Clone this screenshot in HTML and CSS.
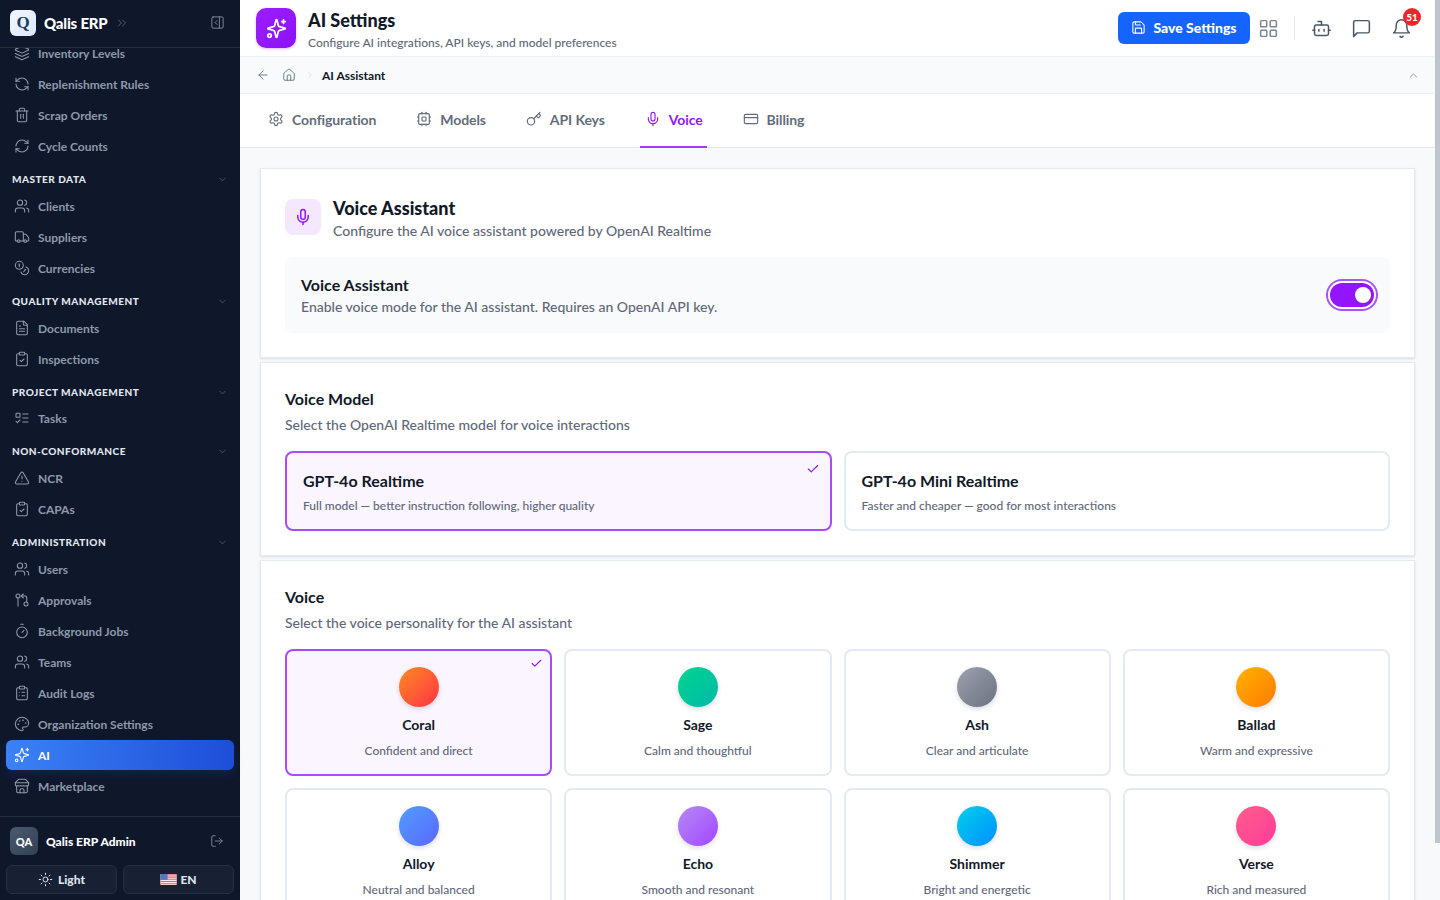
FILE: index.html
```html
<!DOCTYPE html>
<html lang="en">
<head>
    <meta charset="UTF-8">
    <title>AI Settings - Qalis ERP</title>
    <link rel="stylesheet" href="styles.css">
</head>
<body>

    <svg class="icon-defs" aria-hidden="true">
        <symbol id="i-layers" viewBox="0 0 24 24"><path d="m12.83 2.18a2 2 0 0 0-1.66 0L2.6 6.08a1 1 0 0 0 0 1.83l8.58 3.91a2 2 0 0 0 1.66 0l8.58-3.9a1 1 0 0 0 0-1.83Z"/><path d="m22 17.65-9.17 4.16a2 2 0 0 1-1.66 0L2 17.65"/><path d="m22 12.65-9.17 4.16a2 2 0 0 1-1.66 0L2 12.65"/></symbol>
        <symbol id="i-refresh-ccw" viewBox="0 0 24 24"><path d="M21 12a9 9 0 0 0-9-9 9.75 9.75 0 0 0-6.74 2.74L3 8"/><path d="M3 3v5h5"/><path d="M3 12a9 9 0 0 0 9 9 9.75 9.75 0 0 0 6.74-2.74L21 16"/><path d="M16 16h5v5"/></symbol>
        <symbol id="i-refresh-cw" viewBox="0 0 24 24"><path d="M3 12a9 9 0 0 1 9-9 9.75 9.75 0 0 1 6.74 2.74L21 8"/><path d="M21 3v5h-5"/><path d="M21 12a9 9 0 0 1-9 9 9.75 9.75 0 0 1-6.74-2.74L3 16"/><path d="M8 16H3v5"/></symbol>
        <symbol id="i-trash" viewBox="0 0 24 24"><path d="M3 6h18"/><path d="M19 6v14c0 1-1 2-2 2H7c-1 0-2-1-2-2V6"/><path d="M8 6V4c0-1 1-2 2-2h4c1 0 2 1 2 2v2"/><path d="M10 11v6"/><path d="M14 11v6"/></symbol>
        <symbol id="i-users" viewBox="0 0 24 24"><path d="M16 21v-2a4 4 0 0 0-4-4H6a4 4 0 0 0-4 4v2"/><circle cx="9" cy="7" r="4"/><path d="M22 21v-2a4 4 0 0 0-3-3.87"/><path d="M16 3.13a4 4 0 0 1 0 7.75"/></symbol>
        <symbol id="i-truck" viewBox="0 0 24 24"><path d="M14 18V6a2 2 0 0 0-2-2H4a2 2 0 0 0-2 2v11a1 1 0 0 0 1 1h2"/><path d="M15 18H9"/><path d="M19 18h2a1 1 0 0 0 1-1v-3.65a1 1 0 0 0-.22-.624l-3.48-4.35A1 1 0 0 0 17.52 8H14"/><circle cx="17" cy="18" r="2"/><circle cx="7" cy="18" r="2"/></symbol>
        <symbol id="i-coins" viewBox="0 0 24 24"><circle cx="8" cy="8" r="6"/><path d="M18.09 10.37A6 6 0 1 1 10.34 18"/><path d="M7 6h1v4"/><path d="m16.71 13.88.7.71-2.82 2.82"/></symbol>
        <symbol id="i-file" viewBox="0 0 24 24"><path d="M15 2H6a2 2 0 0 0-2 2v16a2 2 0 0 0 2 2h12a2 2 0 0 0 2-2V7Z"/><path d="M14 2v4a2 2 0 0 0 2 2h4"/><path d="M10 9H8"/><path d="M16 13H8"/><path d="M16 17H8"/></symbol>
        <symbol id="i-clip-check" viewBox="0 0 24 24"><rect x="8" y="2" width="8" height="4" rx="1"/><path d="M16 4h2a2 2 0 0 1 2 2v14a2 2 0 0 1-2 2H6a2 2 0 0 1-2-2V6a2 2 0 0 1 2-2h2"/><path d="m9 14 2 2 4-4"/></symbol>
        <symbol id="i-clip-list" viewBox="0 0 24 24"><rect x="8" y="2" width="8" height="4" rx="1"/><path d="M16 4h2a2 2 0 0 1 2 2v14a2 2 0 0 1-2 2H6a2 2 0 0 1-2-2V6a2 2 0 0 1 2-2h2"/><path d="M12 11h4"/><path d="M12 16h4"/><path d="M8 11h.01"/><path d="M8 16h.01"/></symbol>
        <symbol id="i-todo" viewBox="0 0 24 24"><rect x="3" y="5" width="6" height="6" rx="1"/><path d="m3 17 2 2 4-4"/><path d="M13 6h8"/><path d="M13 12h8"/><path d="M13 18h8"/></symbol>
        <symbol id="i-alert" viewBox="0 0 24 24"><path d="m21.73 18-8-14a2 2 0 0 0-3.48 0l-8 14A2 2 0 0 0 4 21h16a2 2 0 0 0 1.73-3"/><path d="M12 9v4"/><path d="M12 17h.01"/></symbol>
        <symbol id="i-pull" viewBox="0 0 24 24"><circle cx="18" cy="18" r="3"/><circle cx="6" cy="6" r="3"/><path d="M11 6h6a2 2 0 0 1 2 2v7"/><path d="m14 9-3-3 3-3"/><path d="M6 9v12"/></symbol>
        <symbol id="i-timer" viewBox="0 0 24 24"><path d="M10 2h4"/><path d="m12 14 3-3"/><circle cx="12" cy="14" r="8"/></symbol>
        <symbol id="i-palette" viewBox="0 0 24 24"><circle cx="13.5" cy="6.5" r=".5"/><circle cx="17.5" cy="10.5" r=".5"/><circle cx="8.5" cy="7.5" r=".5"/><circle cx="6.5" cy="12.5" r=".5"/><path d="M12 2C6.5 2 2 6.5 2 12s4.5 10 10 10c.926 0 1.648-.746 1.648-1.688 0-.437-.18-.835-.437-1.125-.29-.289-.438-.652-.438-1.125a1.64 1.64 0 0 1 1.668-1.668h1.996c3.051 0 5.555-2.503 5.555-5.554C21.965 6.012 17.461 2 12 2z"/></symbol>
        <symbol id="i-sparkles" viewBox="0 0 24 24"><path d="M9.937 15.5A2 2 0 0 0 8.5 14.063l-6.135-1.582a.5.5 0 0 1 0-.962L8.5 9.936A2 2 0 0 0 9.937 8.5l1.582-6.135a.5.5 0 0 1 .963 0L14.063 8.5A2 2 0 0 0 15.5 9.937l6.135 1.581a.5.5 0 0 1 0 .964L15.5 14.063a2 2 0 0 0-1.437 1.437l-1.582 6.135a.5.5 0 0 1-.963 0z"/><path d="M20 2v4"/><path d="M22 4h-4"/><circle cx="4" cy="20" r="2"/></symbol>
        <symbol id="i-store" viewBox="0 0 24 24"><path d="m2 7 4.41-4.41A2 2 0 0 1 7.83 2h8.34a2 2 0 0 1 1.42.59L22 7"/><path d="M4 12v8a2 2 0 0 0 2 2h12a2 2 0 0 0 2-2v-8"/><path d="M15 22v-4a2 2 0 0 0-2-2h-2a2 2 0 0 0-2 2v4"/><path d="M2 7h20"/><path d="M22 7v3a2 2 0 0 1-2 2 2.7 2.7 0 0 1-1.59-.63.7.7 0 0 0-.82 0A2.7 2.7 0 0 1 16 12a2.7 2.7 0 0 1-1.59-.63.7.7 0 0 0-.82 0A2.7 2.7 0 0 1 12 12a2.7 2.7 0 0 1-1.59-.63.7.7 0 0 0-.82 0A2.7 2.7 0 0 1 8 12a2.7 2.7 0 0 1-1.59-.63.7.7 0 0 0-.82 0A2.7 2.7 0 0 1 4 12a2 2 0 0 1-2-2V7"/></symbol>
        <symbol id="i-logout" viewBox="0 0 24 24"><path d="M9 21H5a2 2 0 0 1-2-2V5a2 2 0 0 1 2-2h4"/><path d="m16 17 5-5-5-5"/><path d="M21 12H9"/></symbol>
        <symbol id="i-sun" viewBox="0 0 24 24"><circle cx="12" cy="12" r="4"/><path d="M12 2v2"/><path d="M12 20v2"/><path d="m4.93 4.93 1.41 1.41"/><path d="m17.66 17.66 1.41 1.41"/><path d="M2 12h2"/><path d="M20 12h2"/><path d="m6.34 17.66-1.41 1.41"/><path d="m19.07 4.93-1.41 1.41"/></symbol>
        <symbol id="i-panel" viewBox="0 0 24 24"><rect x="3" y="3" width="18" height="18" rx="2"/><path d="M15 3v18"/><path d="m11 15-3-3 3-3"/></symbol>
        <symbol id="i-chevrons" viewBox="0 0 24 24"><path d="m6 17 5-5-5-5"/><path d="m13 17 5-5-5-5"/></symbol>
        <symbol id="i-down" viewBox="0 0 24 24"><path d="m6 9 6 6 6-6"/></symbol>
        <symbol id="i-up" viewBox="0 0 24 24"><path d="m18 15-6-6-6 6"/></symbol>
        <symbol id="i-right" viewBox="0 0 24 24"><path d="m9 18 6-6-6-6"/></symbol>
        <symbol id="i-back" viewBox="0 0 24 24"><path d="m12 19-7-7 7-7"/><path d="M19 12H5"/></symbol>
        <symbol id="i-home" viewBox="0 0 24 24"><path d="M15 21v-8a1 1 0 0 0-1-1h-4a1 1 0 0 0-1 1v8"/><path d="M3 10a2 2 0 0 1 .709-1.528l7-5.999a2 2 0 0 1 2.582 0l7 5.999A2 2 0 0 1 21 10v9a2 2 0 0 1-2 2H5a2 2 0 0 1-2-2z"/></symbol>
        <symbol id="i-gear" viewBox="0 0 24 24"><path d="M12.22 2h-.44a2 2 0 0 0-2 2v.18a2 2 0 0 1-1 1.73l-.43.25a2 2 0 0 1-2 0l-.15-.08a2 2 0 0 0-2.73.73l-.22.38a2 2 0 0 0 .73 2.73l.15.1a2 2 0 0 1 1 1.72v.51a2 2 0 0 1-1 1.74l-.15.09a2 2 0 0 0-.73 2.73l.22.38a2 2 0 0 0 2.73.73l.15-.08a2 2 0 0 1 2 0l.43.25a2 2 0 0 1 1 1.73V20a2 2 0 0 0 2 2h.44a2 2 0 0 0 2-2v-.18a2 2 0 0 1 1-1.73l.43-.25a2 2 0 0 1 2 0l.15.08a2 2 0 0 0 2.73-.73l.22-.39a2 2 0 0 0-.73-2.73l-.15-.08a2 2 0 0 1-1-1.74v-.5a2 2 0 0 1 1-1.74l.15-.09a2 2 0 0 0 .73-2.73l-.22-.38a2 2 0 0 0-2.73-.73l-.15.08a2 2 0 0 1-2 0l-.43-.25a2 2 0 0 1-1-1.73V4a2 2 0 0 0-2-2z"/><circle cx="12" cy="12" r="3"/></symbol>
        <symbol id="i-cpu" viewBox="0 0 24 24"><rect x="4" y="4" width="16" height="16" rx="2"/><rect x="9" y="9" width="6" height="6" rx="1"/><path d="M15 2v2"/><path d="M15 20v2"/><path d="M2 15h2"/><path d="M2 9h2"/><path d="M20 15h2"/><path d="M20 9h2"/><path d="M9 2v2"/><path d="M9 20v2"/></symbol>
        <symbol id="i-key" viewBox="0 0 24 24"><path d="m15.5 7.5 2.3 2.3a1 1 0 0 0 1.4 0l2.1-2.1a1 1 0 0 0 0-1.4L19 4"/><path d="m21 2-9.6 9.6"/><circle cx="7.5" cy="15.5" r="5.5"/></symbol>
        <symbol id="i-mic" viewBox="0 0 24 24"><path d="M12 2a3 3 0 0 0-3 3v7a3 3 0 0 0 6 0V5a3 3 0 0 0-3-3Z"/><path d="M19 10v2a7 7 0 0 1-14 0v-2"/><path d="M12 19v3"/></symbol>
        <symbol id="i-card" viewBox="0 0 24 24"><rect x="2" y="5" width="20" height="14" rx="2"/><path d="M2 10h20"/></symbol>
        <symbol id="i-save" viewBox="0 0 24 24"><path d="M15.2 3a2 2 0 0 1 1.4.6l3.8 3.8a2 2 0 0 1 .6 1.4V19a2 2 0 0 1-2 2H5a2 2 0 0 1-2-2V5a2 2 0 0 1 2-2z"/><path d="M17 21v-7a1 1 0 0 0-1-1H8a1 1 0 0 0-1 1v7"/><path d="M7 3v4a1 1 0 0 0 1 1h7"/></symbol>
        <symbol id="i-grid" viewBox="0 0 24 24"><rect x="3" y="3" width="7" height="7" rx="1"/><rect x="14" y="3" width="7" height="7" rx="1"/><rect x="14" y="14" width="7" height="7" rx="1"/><rect x="3" y="14" width="7" height="7" rx="1"/></symbol>
        <symbol id="i-bot" viewBox="0 0 24 24"><path d="M12 8V4H8"/><rect x="4" y="8" width="16" height="12" rx="2"/><path d="M2 14h2"/><path d="M20 14h2"/><path d="M15 13v2"/><path d="M9 13v2"/></symbol>
        <symbol id="i-message" viewBox="0 0 24 24"><path d="M21 15a2 2 0 0 1-2 2H7l-4 4V5a2 2 0 0 1 2-2h14a2 2 0 0 1 2 2z"/></symbol>
        <symbol id="i-bell" viewBox="0 0 24 24"><path d="M6 8a6 6 0 0 1 12 0c0 7 3 9 3 9H3s3-2 3-9"/><path d="M10.3 21a1.94 1.94 0 0 0 3.4 0"/></symbol>
        <symbol id="i-check" viewBox="0 0 24 24"><path d="M20 6 9 17l-5-5"/></symbol>
    </svg>

    <div class="app">
        <aside class="sidebar">
            <div class="brand">
                <span class="brand-logo">Q</span>
                <span class="brand-name">Qalis ERP</span>
                <svg class="icon brand-more"><use href="#i-chevrons"/></svg>
                <svg class="icon brand-collapse"><use href="#i-panel"/></svg>
            </div>

            <nav class="nav">
                <div class="nav-list">
                    <a class="nav-item"><svg class="icon"><use href="#i-layers"/></svg>Inventory Levels</a>
                    <a class="nav-item"><svg class="icon"><use href="#i-refresh-ccw"/></svg>Replenishment Rules</a>
                    <a class="nav-item"><svg class="icon"><use href="#i-trash"/></svg>Scrap Orders</a>
                    <a class="nav-item"><svg class="icon"><use href="#i-refresh-cw"/></svg>Cycle Counts</a>

                    <div class="nav-group">MASTER DATA<svg class="icon"><use href="#i-down"/></svg></div>
                    <a class="nav-item"><svg class="icon"><use href="#i-users"/></svg>Clients</a>
                    <a class="nav-item"><svg class="icon"><use href="#i-truck"/></svg>Suppliers</a>
                    <a class="nav-item"><svg class="icon"><use href="#i-coins"/></svg>Currencies</a>

                    <div class="nav-group">QUALITY MANAGEMENT<svg class="icon"><use href="#i-down"/></svg></div>
                    <a class="nav-item"><svg class="icon"><use href="#i-file"/></svg>Documents</a>
                    <a class="nav-item"><svg class="icon"><use href="#i-clip-check"/></svg>Inspections</a>

                    <div class="nav-group nav-group-tight">PROJECT MANAGEMENT<svg class="icon"><use href="#i-down"/></svg></div>
                    <a class="nav-item"><svg class="icon"><use href="#i-todo"/></svg>Tasks</a>

                    <div class="nav-group">NON-CONFORMANCE<svg class="icon"><use href="#i-down"/></svg></div>
                    <a class="nav-item"><svg class="icon"><use href="#i-alert"/></svg>NCR</a>
                    <a class="nav-item"><svg class="icon"><use href="#i-clip-check"/></svg>CAPAs</a>

                    <div class="nav-group">ADMINISTRATION<svg class="icon"><use href="#i-down"/></svg></div>
                    <a class="nav-item"><svg class="icon"><use href="#i-users"/></svg>Users</a>
                    <a class="nav-item"><svg class="icon"><use href="#i-pull"/></svg>Approvals</a>
                    <a class="nav-item"><svg class="icon"><use href="#i-timer"/></svg>Background Jobs</a>
                    <a class="nav-item"><svg class="icon"><use href="#i-users"/></svg>Teams</a>
                    <a class="nav-item"><svg class="icon"><use href="#i-clip-list"/></svg>Audit Logs</a>
                    <a class="nav-item"><svg class="icon"><use href="#i-palette"/></svg>Organization Settings</a>
                    <a class="nav-item active"><svg class="icon"><use href="#i-sparkles"/></svg>AI</a>
                    <a class="nav-item"><svg class="icon"><use href="#i-store"/></svg>Marketplace</a>
                </div>
            </nav>

            <div class="side-footer">
                <div class="user-row">
                    <span class="avatar">QA</span>
                    <span class="user-name">Qalis ERP Admin</span>
                    <svg class="icon user-logout"><use href="#i-logout"/></svg>
                </div>
                <div class="side-buttons">
                    <button class="side-btn"><svg class="icon"><use href="#i-sun"/></svg>Light</button>
                    <button class="side-btn side-btn-lang">
                        <svg class="flag" viewBox="0 0 18 12">
                            <rect width="18" height="12" fill="#f6e4e8"/>
                            <path d="M0 1h18M0 3.4h18M0 5.8h18M0 8.2h18M0 10.6h18" stroke="#e8626f" stroke-width="1.2"/>
                            <rect width="8" height="6.4" fill="#5578bd"/>
                        </svg>EN
                    </button>
                </div>
            </div>
        </aside>

        <div class="main">
            <header class="topbar">
                <span class="page-logo"><svg class="icon"><use href="#i-sparkles"/></svg></span>
                <div class="page-title">
                    <h1>AI Settings</h1>
                    <p>Configure AI integrations, API keys, and model preferences</p>
                </div>
                <button class="save-btn"><svg class="icon"><use href="#i-save"/></svg>Save Settings</button>
                <svg class="icon top-grid"><use href="#i-grid"/></svg>
                <span class="top-divider"></span>
                <svg class="icon top-icon"><use href="#i-bot"/></svg>
                <svg class="icon top-icon"><use href="#i-message"/></svg>
                <span class="bell">
                    <svg class="icon top-icon"><use href="#i-bell"/></svg>
                    <span class="badge">51</span>
                </span>
            </header>

            <div class="crumbs">
                <svg class="icon"><use href="#i-back"/></svg>
                <svg class="icon crumb-home"><use href="#i-home"/></svg>
                <svg class="icon crumb-sep"><use href="#i-right"/></svg>
                <span class="crumb-current">AI Assistant</span>
                <svg class="icon crumb-up"><use href="#i-up"/></svg>
            </div>

            <div class="tabs">
                <a class="tab"><svg class="icon"><use href="#i-gear"/></svg>Configuration</a>
                <a class="tab"><svg class="icon"><use href="#i-cpu"/></svg>Models</a>
                <a class="tab"><svg class="icon"><use href="#i-key"/></svg>API Keys</a>
                <a class="tab active"><svg class="icon"><use href="#i-mic"/></svg>Voice</a>
                <a class="tab"><svg class="icon"><use href="#i-card"/></svg>Billing</a>
            </div>

            <div class="content">
                <section class="panel panel-assistant">
                    <div class="panel-head">
                        <span class="mic-box"><svg class="icon"><use href="#i-mic"/></svg></span>
                        <div>
                            <h2>Voice Assistant</h2>
                            <p class="panel-sub">Configure the AI voice assistant powered by OpenAI Realtime</p>
                        </div>
                    </div>
                    <div class="toggle-row">
                        <div class="toggle-text">
                            <h3>Voice Assistant</h3>
                            <p class="panel-sub">Enable voice mode for the AI assistant. Requires an OpenAI API key.</p>
                        </div>
                        <span class="toggle"><span class="toggle-knob"></span></span>
                    </div>
                </section>

                <section class="panel">
                    <h3 class="panel-title">Voice Model</h3>
                    <p class="panel-sub">Select the OpenAI Realtime model for voice interactions</p>
                    <div class="model-grid">
                        <div class="option model selected">
                            <svg class="icon tick"><use href="#i-check"/></svg>
                            <h4>GPT-4o Realtime</h4>
                            <p>Full model — better instruction following, higher quality</p>
                        </div>
                        <div class="option model">
                            <h4>GPT-4o Mini Realtime</h4>
                            <p>Faster and cheaper — good for most interactions</p>
                        </div>
                    </div>
                </section>

                <section class="panel">
                    <h3 class="panel-title">Voice</h3>
                    <p class="panel-sub">Select the voice personality for the AI assistant</p>
                    <div class="voice-grid">
                        <div class="option voice selected">
                            <svg class="icon tick"><use href="#i-check"/></svg>
                            <span class="orb orb-coral"></span>
                            <h5>Coral</h5>
                            <p>Confident and direct</p>
                        </div>
                        <div class="option voice">
                            <span class="orb orb-sage"></span>
                            <h5>Sage</h5>
                            <p>Calm and thoughtful</p>
                        </div>
                        <div class="option voice">
                            <span class="orb orb-ash"></span>
                            <h5>Ash</h5>
                            <p>Clear and articulate</p>
                        </div>
                        <div class="option voice">
                            <span class="orb orb-ballad"></span>
                            <h5>Ballad</h5>
                            <p>Warm and expressive</p>
                        </div>
                        <div class="option voice">
                            <span class="orb orb-alloy"></span>
                            <h5>Alloy</h5>
                            <p>Neutral and balanced</p>
                        </div>
                        <div class="option voice">
                            <span class="orb orb-echo"></span>
                            <h5>Echo</h5>
                            <p>Smooth and resonant</p>
                        </div>
                        <div class="option voice">
                            <span class="orb orb-shimmer"></span>
                            <h5>Shimmer</h5>
                            <p>Bright and energetic</p>
                        </div>
                        <div class="option voice">
                            <span class="orb orb-verse"></span>
                            <h5>Verse</h5>
                            <p>Rich and measured</p>
                        </div>
                    </div>
                </section>
            </div>
        </div>

        <div class="scroll-rail"><div class="scroll-thumb"></div></div>
    </div>

</body>
</html>
```

FILE: styles.css
```css
* {
    box-sizing: border-box;
}

html, body {
    height: 100%;
    margin: 0;
}

body {
    font-family: 'Lato', 'Noto Sans', sans-serif;
    color: #111827;
    background-color: #f8f9fb;
    overflow: hidden;
}

h1, h2, h3, h4, h5, p {
    margin: 0;
}

.icon-defs {
    display: none;
}

.icon {
    width: 16px;
    height: 16px;
    flex: none;
    fill: none;
    stroke: currentColor;
    stroke-width: 2;
    stroke-linecap: round;
    stroke-linejoin: round;
}

.app {
    display: flex;
    height: 100vh;
}

/* sidebar */

.sidebar {
    width: 240px;
    flex: none;
    display: flex;
    flex-direction: column;
    background-color: #0f172a;
}

/* the brand bar sits over the scrolled nav list */
.brand {
    position: relative;
    z-index: 1;
    height: 48px;
    flex: none;
    display: flex;
    align-items: center;
    padding: 0 15px 2px 10px;
    background-color: #0f172a;
    border-bottom: 1px solid #222b3c;
}

.brand-logo {
    width: 26px;
    height: 26px;
    display: flex;
    align-items: center;
    justify-content: center;
    border-radius: 6px;
    background: linear-gradient(135deg, #f3f7ff, #dbe7fd);
    color: #1e3a5f;
    font-family: 'Liberation Serif', serif;
    font-size: 17px;
    font-weight: 700;
}

.brand-name {
    margin-left: 8px;
    color: #fff;
    font-size: 15px;
    font-weight: 900;
    letter-spacing: -0.2px;
}

.brand-more {
    width: 14px;
    height: 14px;
    margin-left: 7px;
    color: #566276;
    stroke-width: 1.6;
}

.brand-collapse {
    width: 15px;
    height: 15px;
    margin-left: auto;
    color: #7c8798;
    stroke-width: 1.6;
}

.nav {
    flex: 1;
}

.nav-list {
    margin-top: -10px;
    display: flex;
    flex-direction: column;
    gap: 1px;
}

.nav-item {
    height: 30px;
    margin: 0 6px;
    padding-left: 8px;
    display: flex;
    align-items: center;
    gap: 8px;
    border-radius: 6px;
    color: #8e99aa;
    font-size: 12px;
    font-weight: 700;
}

.nav-item .icon {
    stroke-width: 1.6;
}

.nav-item.active {
    color: #fff;
    background: linear-gradient(90deg, #3b82f6, #1d4ed8);
    box-shadow: 0 4px 10px rgba(29, 78, 216, 0.2);
}

.nav-group {
    height: 14px;
    margin: 10px 0 4px;
    padding: 0 12px;
    display: flex;
    align-items: center;
    justify-content: space-between;
    color: #e2e8f0;
    font-size: 10px;
    font-weight: 900;
    letter-spacing: 0.5px;
}

.nav-group-tight {
    margin-bottom: 3px;
}

.nav-group .icon {
    width: 11px;
    height: 11px;
    color: #5b6678;
    stroke-width: 1.6;
}

.side-footer {
    height: 84px;
    flex: none;
    padding: 10px 6px 0;
    border-top: 1px solid #222b3c;
}

.user-row {
    display: flex;
    align-items: center;
    padding: 0 10px 0 4px;
}

.avatar {
    width: 28px;
    height: 28px;
    display: flex;
    align-items: center;
    justify-content: center;
    border-radius: 6px;
    background: linear-gradient(135deg, #4a5a70, #334155);
    color: #fff;
    font-size: 11px;
    font-weight: 900;
}

.user-name {
    margin-left: 8px;
    color: #fff;
    font-size: 12px;
    font-weight: 900;
}

.user-logout {
    width: 14px;
    height: 14px;
    margin-left: auto;
    color: #7c8798;
    stroke-width: 1.6;
}

.side-buttons {
    margin-top: 10px;
    display: flex;
    gap: 6px;
}

.side-btn {
    flex: 1;
    height: 29px;
    display: flex;
    align-items: center;
    justify-content: center;
    gap: 5px;
    border: 1px solid #262f40;
    border-radius: 6px;
    background-color: #182033;
    color: #dfe4ec;
    font-family: inherit;
    font-size: 12px;
    font-weight: 900;
}

.side-btn-lang {
    gap: 3px;
}

.side-btn .icon {
    width: 15px;
    height: 15px;
    stroke-width: 1.6;
}

.flag {
    width: 17px;
    height: 11px;
    border-radius: 1px;
}

/* main column */

.main {
    flex: 1;
    min-width: 0;
    overflow: hidden;
}

.scroll-rail {
    width: 6px;
    flex: none;
    padding-left: 1px;
    background-color: #f8f9fb;
}

.scroll-thumb {
    height: 843px;
    background-color: #bfc5cd;
}

.topbar {
    height: 57px;
    display: flex;
    align-items: center;
    padding: 0 22px 0 16px;
    background-color: #fff;
    border-bottom: 1px solid #eef0f4;
}

.page-logo {
    width: 40px;
    height: 40px;
    display: flex;
    align-items: center;
    justify-content: center;
    border-radius: 10px;
    background: linear-gradient(135deg, #9d1dff, #8a12f5);
    box-shadow: 0 1px 3px rgba(147, 21, 255, 0.3);
    color: #fff;
}

.page-logo .icon {
    width: 21px;
    height: 21px;
}

.page-title {
    margin-left: 12px;
    padding-top: 2px;
}

.page-title h1 {
    font-size: 18px;
    line-height: 24px;
    font-weight: 900;
}

.page-title p {
    margin-top: 3px;
    color: #5f6878;
    font-size: 12px;
    line-height: 16px;
    font-weight: 500;
}

.save-btn {
    width: 132px;
    height: 32px;
    margin-left: auto;
    padding: 0 0 1px;
    display: flex;
    align-items: center;
    justify-content: center;
    gap: 7px;
    border: 0;
    border-radius: 6px;
    background-color: #1664ff;
    color: #fff;
    font-family: inherit;
    font-size: 14px;
    font-weight: 900;
}

.save-btn .icon {
    width: 15px;
    height: 15px;
    stroke-width: 1.7;
}

.top-grid {
    width: 21px;
    height: 21px;
    margin-left: 8px;
    color: #7a8494;
    stroke-width: 1.7;
}

.top-divider {
    width: 1px;
    height: 24px;
    margin: 0 16px 0 15px;
    background-color: #e5e7eb;
}

.top-icon {
    width: 21px;
    height: 21px;
    color: #4b5563;
    stroke-width: 1.7;
}

.top-icon + .top-icon {
    margin-left: 19px;
}

.bell {
    margin-left: 19px;
    position: relative;
    display: flex;
}

.badge {
    position: absolute;
    top: -10px;
    left: 12px;
    width: 18px;
    height: 18px;
    display: flex;
    align-items: center;
    justify-content: center;
    border-radius: 50%;
    background-color: #f5222d;
    color: #fff;
    font-size: 10px;
    font-weight: 900;
}

.crumbs {
    height: 37px;
    display: flex;
    align-items: center;
    padding: 0 14px 0 16px;
    background-color: #f9fafb;
    border-bottom: 1px solid #eef0f4;
    color: #64748b;
}

.crumbs .icon {
    width: 14px;
    height: 14px;
    stroke-width: 1.6;
}

.crumbs .crumb-home {
    margin-left: 12px;
}

.crumbs .crumb-sep {
    width: 10px;
    height: 10px;
    margin-left: 9px;
    color: #cbd5e1;
}

.crumb-current {
    margin-left: 7px;
    color: #111827;
    font-size: 12px;
    font-weight: 700;
}

.crumbs .crumb-up {
    margin-left: auto;
    width: 13px;
    height: 13px;
    color: #7f8ca0;
}

.tabs {
    height: 54px;
    display: flex;
    gap: 31px;
    padding-left: 23px;
    background-color: #fff;
    border-bottom: 1px solid #e5e7eb;
}

.tab {
    display: flex;
    align-items: center;
    gap: 8px;
    padding: 0 4px 2px 5px;
    margin-bottom: -1px;
    border-bottom: 2px solid transparent;
    color: #636c7b;
    font-size: 14px;
    font-weight: 700;
    letter-spacing: -0.1px;
}

.tab .icon {
    stroke-width: 1.7;
}

.tab.active {
    color: #9315ff;
    border-bottom-color: #a03cf5;
}

/* settings panels */

.content {
    display: flex;
    flex-direction: column;
    gap: 4px;
    padding: 20px 19px 25px 20px;
}

.panel {
    padding: 26px 24px 24px;
    background-color: #fff;
    border: 1px solid #e4eaf2;
    box-shadow: 0 1px 2px rgba(15, 23, 42, 0.12);
}

.panel-assistant {
    padding-top: 30px;
}

.panel-head {
    display: flex;
    gap: 12px;
}

.panel-head h2 {
    font-size: 18px;
    line-height: 18px;
    font-weight: 900;
}

.mic-box {
    width: 36px;
    height: 36px;
    display: flex;
    align-items: center;
    justify-content: center;
    border-radius: 8px;
    background-color: #f3e8ff;
    color: #9315ff;
}

.mic-box .icon {
    width: 18px;
    height: 18px;
}

.panel-head .panel-sub {
    margin-top: 4px;
}

.panel-sub {
    color: #5f6878;
    font-size: 14px;
    line-height: 20px;
    font-weight: 500;
}

.toggle-row {
    height: 76px;
    margin-top: 16px;
    padding: 0 12px 0 16px;
    display: flex;
    align-items: center;
    justify-content: space-between;
    border-radius: 8px;
    background-color: #f9fafb;
}

.toggle-text {
    margin-top: 2px;
}

.toggle-row h3 {
    font-size: 16px;
    line-height: 20px;
    font-weight: 700;
}

.toggle-row .panel-sub {
    margin-top: 2px;
}

.toggle {
    width: 44px;
    height: 24px;
    margin: 4px;
    padding: 3px;
    display: flex;
    justify-content: flex-end;
    border-radius: 12px;
    background-color: #9315ff;
    box-shadow: 0 0 0 2px #fff, 0 0 0 4px #a855f7;
}

.toggle-knob {
    width: 16px;
    height: 16px;
    margin-top: 1px;
    border-radius: 50%;
    background-color: #fff;
}

.panel-title {
    font-size: 16px;
    line-height: 20px;
    font-weight: 700;
}

.panel-title + .panel-sub {
    margin-top: 6px;
}

.model-grid {
    margin-top: 16px;
    display: grid;
    grid-template-columns: repeat(2, 1fr);
    gap: 12px;
}

.voice-grid {
    margin-top: 16px;
    display: grid;
    grid-template-columns: repeat(4, 1fr);
    gap: 12px;
}

.option {
    position: relative;
    background-color: #fff;
    border: 2px solid #e4eaf2;
    border-radius: 8px;
}

.option.selected {
    border-color: #a94cf7;
    background-color: #faf5ff;
}

.tick {
    position: absolute;
    color: #9315ff;
    stroke-width: 2;
}

.model .tick {
    top: 9px;
    right: 10px;
    width: 14px;
    height: 14px;
}

.voice .tick {
    top: 6px;
    right: 7px;
    width: 13px;
    height: 13px;
}

.model {
    height: 80px;
    padding: 18px 16px 0;
}

.model h4 {
    font-size: 16px;
    line-height: 20px;
    font-weight: 700;
}

.model p {
    margin-top: 7px;
    color: #5f6878;
    font-size: 12px;
    line-height: 16px;
    font-weight: 500;
}

.voice {
    height: 127px;
    padding-top: 16px;
    display: flex;
    flex-direction: column;
    align-items: center;
    text-align: center;
}

.voice h5 {
    margin-top: 8px;
    font-size: 14px;
    line-height: 20px;
    font-weight: 700;
}

.voice p {
    margin-top: 8px;
    color: #5f6878;
    font-size: 12px;
    line-height: 16px;
    font-weight: 500;
}

.orb {
    width: 40px;
    height: 40px;
    border-radius: 50%;
    box-shadow: 0 2px 5px rgba(15, 23, 42, 0.15);
}

.orb-coral { background: linear-gradient(135deg, #ff8a1f, #ff3347); }
.orb-sage { background: linear-gradient(135deg, #00d68f, #00b8a9); }
.orb-ash { background: linear-gradient(135deg, #9ca3af, #6b7280); }
.orb-ballad { background: linear-gradient(135deg, #ffb300, #ff7a00); }
.orb-alloy { background: linear-gradient(135deg, #4f9dff, #5b67ff); }
.orb-echo { background: linear-gradient(135deg, #b58af5, #a346ff); }
.orb-shimmer { background: linear-gradient(135deg, #00d0ea, #0090ff); }
.orb-verse { background: linear-gradient(135deg, #ff5c8a, #ff3d9a); }
```
